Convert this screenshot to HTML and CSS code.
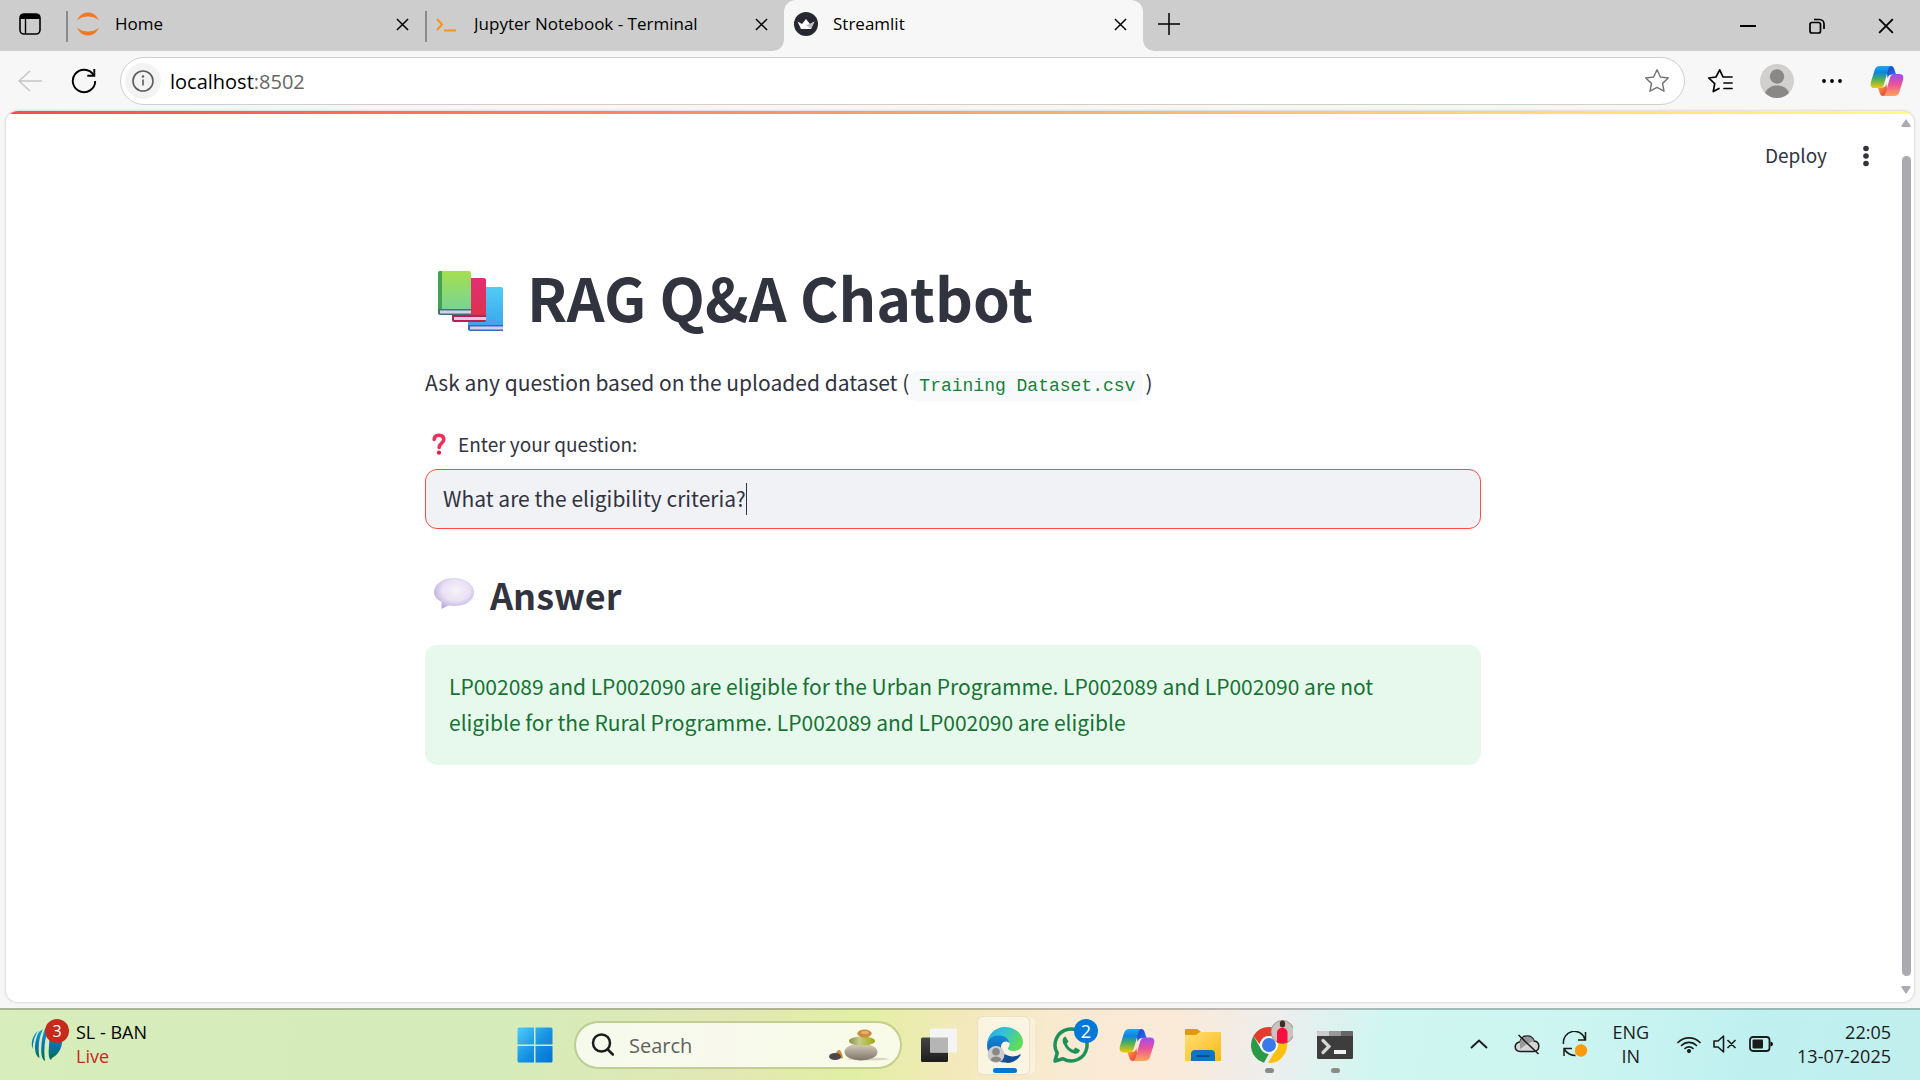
FILE: index.html
```html
<!DOCTYPE html>
<html lang="en">
<head>
<meta charset="utf-8">
<title>Streamlit</title>
<link rel="stylesheet" href="styles.css">
</head>
<body>
<svg class="defs" width="0" height="0" aria-hidden="true">
  <defs>
    <linearGradient id="cpA" x1="0" y1="0" x2="0" y2="1"><stop offset="0" stop-color="#1da9f5"/><stop offset=".3" stop-color="#0f83dc"/><stop offset=".6" stop-color="#4bb05a"/><stop offset="1" stop-color="#f7c80a"/></linearGradient>
    <linearGradient id="cpB" x1="0" y1="0" x2="0" y2="1"><stop offset="0" stop-color="#9b4df5"/><stop offset=".45" stop-color="#e9509a"/><stop offset="1" stop-color="#ffa657"/></linearGradient>
    <linearGradient id="cpC" x1="0" y1="0" x2="1" y2="1"><stop offset="0" stop-color="#1a3fc4"/><stop offset="1" stop-color="#2a7af0"/></linearGradient>
    <linearGradient id="cpD" x1="0" y1="0" x2="1" y2="1"><stop offset="0" stop-color="#ffb02e"/><stop offset="1" stop-color="#e0304e"/></linearGradient>
    <symbol id="copilot" viewBox="0 0 36 36">
      <path d="M17 2h5c2 0 3 1 3.600 3l2 6h-4c-3 0-4 1-5 4z" fill="url(#cpC)"/>
      <path d="M19 34h-5c-2 0-3-1-3.600-3l-2-6h4c3 0 4-1 5-4z" fill="url(#cpD)"/>
      <path d="M10.500 2H23c-2 0-3 1.500-3.600 3.500L15 21c-.8 3-2.400 4.500-5 4.500H4.500C1 25.500 0 22.500 1 19L5 6c.9-2.700 2.600-4 5.500-4z" fill="url(#cpA)"/>
      <path d="M25.500 34H13c2 0 3-1.500 3.600-3.500L21 15c.8-3 2.400-4.500 5-4.500h5.500c3.500 0 4.500 3 3.500 6.500l-4 13c-.9 2.700-2.600 4-5.500 4z" fill="url(#cpB)"/>
    </symbol>
    <symbol id="cross" viewBox="0 0 14 14"><path d="M1 1l12 12M13 1L1 13" fill="none" stroke="#000" stroke-width="1.600"/></symbol>
  </defs>
</svg>

<header class="tabstrip">
  <button class="tab-actions" aria-label="Tab actions">
    <svg width="22" height="22" viewBox="0 0 22 22"><rect x="1" y="1" width="20" height="20" rx="4" fill="none" stroke="#000" stroke-width="1.600"/><path d="M1 6V4a3 3 0 0 1 3-3h14a3 3 0 0 1 3 3v2z"/><path d="M6.500 6v15" stroke="#000" stroke-width="1.400"/></svg>
  </button>
  <div class="tab">
    <svg width="24" height="24" viewBox="0 0 24 24" fill="#f37726"><path d="M1 8.500C3 3.500 7 .5 12 .5s9 3 11 8C20.500 6 16.500 4.500 12 4.500S3.500 6 1 8.500z"/><path d="M1 15.500c2 5 6 8 11 8s9-3 11-8c-2.500 2.500-6.500 4-11 4s-8.500-1.500-11-4z"/></svg>
    <span class="tab-title">Home</span>
    <button class="tab-close" aria-label="Close tab"><svg width="13" height="13"><use href="#cross"/></svg></button>
  </div>
  <div class="tab">
    <svg width="24" height="24" viewBox="0 0 24 24" fill="none" stroke="#ff9018" stroke-width="2"><path d="M2 7l5 5.500L2 18M9 18.500h12"/></svg>
    <span class="tab-title">Jupyter Notebook - Terminal</span>
    <button class="tab-close" aria-label="Close tab"><svg width="13" height="13"><use href="#cross"/></svg></button>
  </div>
  <div class="tab active">
    <svg width="24" height="24" viewBox="0 0 24 24"><circle cx="12" cy="12" r="12" fill="#262730"/><path d="M3.500 9.500l4.500 2.500 4-5 4 5 4.500-2.500-3.500 7.500H7z" fill="#fff"/><path d="M12 13l4-1 4.500-2.500-3.500 7z" fill="#bbb"/></svg>
    <span class="tab-title">Streamlit</span>
    <button class="tab-close" aria-label="Close tab"><svg width="13" height="13"><use href="#cross"/></svg></button>
  </div>
  <button class="new-tab" aria-label="New tab"><svg width="22" height="22" viewBox="0 0 22 22"><path d="M11 0v22M0 11h22" stroke="#000" stroke-width="1.500"/></svg></button>
  <div class="window-controls">
    <button aria-label="Minimize"><svg width="16" height="16" viewBox="0 0 16 16"><path d="M0 8h16" stroke="#000" stroke-width="2"/></svg></button>
    <button aria-label="Restore"><svg width="16" height="16" viewBox="0 0 16 16" fill="none" stroke="#000" stroke-width="1.700"><rect x="1" y="4.500" width="10.500" height="10.500" rx="2"/><path d="M5 1.500h5.500a4.500 4.500 0 0 1 4.500 4.500v5"/></svg></button>
    <button aria-label="Close"><svg width="16" height="16"><use href="#cross"/></svg></button>
  </div>
</header>

<nav class="toolbar">
  <button class="back" aria-label="Back"><svg width="24" height="24" viewBox="0 0 24 24" fill="none" stroke="#c6c6c6" stroke-width="1.500"><path d="M24 12H1M12 2L1 12l11 10"/></svg></button>
  <button class="reload" aria-label="Refresh"><svg width="26" height="26" viewBox="0 0 26 26" fill="none" stroke="#000" stroke-width="1.900"><path d="M22.500 7A11.200 11.200 0 1 0 24.200 13"/><path d="M23.300 1v6.800h-7"/></svg></button>
  <div class="address">
    <button class="site-info" aria-label="View site information"><svg width="22" height="22" viewBox="0 0 22 22"><circle cx="11" cy="11" r="10" fill="none" stroke="#5c5c5c" stroke-width="1.600"/><path d="M11 9.500v6" stroke="#5c5c5c" stroke-width="1.600"/><circle cx="11" cy="6.500" r="1.200" fill="#5c5c5c"/></svg></button>
    <span class="url">localhost<span class="port">:8502</span></span>
    <button aria-label="Add to favorites"><svg width="26" height="26" viewBox="0 0 26 26"><path d="M13 1.800l3.400 7.200 7.900 1-5.800 5.400 1.500 7.800-7-3.800-7 3.800 1.500-7.800L1.700 10l7.900-1z" fill="none" stroke="#767676" stroke-width="1.500" stroke-linejoin="round"/></svg></button>
  </div>
  <div class="tools">
    <button aria-label="Favorites"><svg width="26" height="26" viewBox="0 0 26 26" fill="none" stroke="#000" stroke-width="1.700" stroke-linejoin="round" stroke-linecap="round"><path d="M12 20.500L6.300 23.500l1.400-7.800L1.700 10l7.300-1 3.700-7.200L16 9h9M17 15h8M17 20.500h8"/></svg></button>
    <button aria-label="Profile"><svg width="34" height="34" viewBox="0 0 34 34"><circle cx="17" cy="17" r="17" fill="#d2d0ce"/><ellipse cx="17" cy="12.500" rx="7.200" ry="7.200" fill="#8a8886"/><path d="M5 29c2-5 6.500-7.500 12-7.500S27 24 29 29c-3 3-7.500 5-12 5s-9-2-12-5z" fill="#8a8886"/></svg></button>
    <button aria-label="Settings and more"><svg width="22" height="6" viewBox="0 0 22 6"><circle cx="3" cy="3" r="1.900"/><circle cx="11" cy="3" r="1.900"/><circle cx="19" cy="3" r="1.900"/></svg></button>
    <button aria-label="Copilot"><svg width="34" height="34"><use href="#copilot"/></svg></button>
  </div>
</nav>

<div class="viewport">
  <div class="app">
    <div class="app-header">
      <button class="deploy">Deploy</button>
      <button class="menu" aria-label="Main menu"><svg width="6" height="22" viewBox="0 0 6 22" fill="#31333f"><circle cx="3" cy="3.500" r="2.800"/><circle cx="3" cy="11" r="2.800"/><circle cx="3" cy="18.500" r="2.800"/></svg></button>
    </div>
    <main class="block">
      <h1>
        <svg width="66" height="70" viewBox="0 -8 66 70" aria-hidden="true">
          <defs>
            <linearGradient id="bkG" x1="0" y1="0" x2="0" y2="1"><stop offset="0" stop-color="#a5df50"/><stop offset="1" stop-color="#78d493"/></linearGradient>
            <linearGradient id="bkB" x1="0" y1="0" x2="0" y2="1"><stop offset="0" stop-color="#52cdf5"/><stop offset="1" stop-color="#3ba6ed"/></linearGradient>
            <linearGradient id="bkR" x1="0" y1="0" x2="0" y2="1"><stop offset="0" stop-color="#e32e74"/><stop offset="1" stop-color="#dc3350"/></linearGradient>
          </defs>
          <path d="M31 19a2 2 0 0 1 2-2h31a2 2 0 0 1 2 2v36H31z" fill="url(#bkB)"/><path d="M31 55h35v6H33a2 2 0 0 1-2-2z" fill="#3469c8"/><path d="M33 56.500h33v3H33z" fill="#d3cdf0"/>
          <path d="M15 10a2 2 0 0 1 2-2h30a2 2 0 0 1 2 2v36H15z" fill="url(#bkR)"/><path d="M15 45h34v5a2 2 0 0 1-2 2H17a2 2 0 0 1-2-2z" fill="#ba1f55"/><path d="M17 47h32v3H17z" fill="#e0c8e8"/>
          <path d="M1 3a2 2 0 0 1 2-2h29a2 2 0 0 1 2 2v36H1z" fill="url(#bkG)"/><path d="M1 3a2 2 0 0 1 2-2h2v38H1z" fill="#46a052"/><path d="M1 39h33v6H3a2 2 0 0 1-2-2z" fill="#3b7471"/><path d="M3 40.500h31v3H3z" fill="#d8d0ee"/>
        </svg>
        RAG Q&amp;A Chatbot
      </h1>
      <p class="intro">Ask any question based on the uploaded dataset (<code>Training Dataset.csv</code>)</p>
      <label class="field-label" for="question">
        <svg width="14" height="22" viewBox="0 0 14 22" aria-hidden="true"><path d="M2.200 6.500C2.200 3.500 4 2.200 7 2.200s4.800 1.500 4.800 4.300c0 3.700-4.600 3.500-4.600 8" fill="none" stroke="#ee3158" stroke-width="3.600" stroke-linecap="round"/><circle cx="7" cy="19.700" r="2.100" fill="#e01f45"/></svg>
        Enter your question:
      </label>
      <div class="field"><input id="question" type="text" value="What are the eligibility criteria?"><span class="caret"></span></div>
      <h2>
        <svg width="42" height="34" viewBox="0 0 42 34" aria-hidden="true">
          <defs><radialGradient id="bub" cx=".55" cy=".4" r=".62"><stop offset="0" stop-color="#f6f2fb"/><stop offset=".55" stop-color="#e9e1f4"/><stop offset="1" stop-color="#bba9dc"/></radialGradient></defs>
          <path d="M21 1c11.500 0 20 6.300 20 14.500S32.500 29 21 29c-2 0-4 0-5.500-.4L8.500 32v-7C4 22.500 1 19.500 1 15.500 1 7.300 9.500 1 21 1z" fill="url(#bub)"/>
        </svg>
        Answer
      </h2>
      <div class="alert" role="status">LP002089 and LP002090 are eligible for the Urban Programme. LP002089 and LP002090 are not eligible for the Rural Programme. LP002089 and LP002090 are eligible</div>
    </main>
  </div>
  <div class="scrollbar" aria-hidden="true">
    <svg width="10" height="8" viewBox="0 0 10 8"><path d="M5 0l4.500 6.500q.4 1.500-1 1.500h-7q-1.400 0-1-1.500z" fill="#aaaab0"/></svg>
    <div class="thumb"></div>
    <svg width="10" height="8" viewBox="0 0 10 8"><path d="M5 8l4.500-6.500Q9.900 0 8.500 0h-7Q.1 0 .5 1.500z" fill="#aaaab0"/></svg>
  </div>
</div>

<footer class="taskbar">
  <button class="widget">
    <span class="widget-icon">
      <svg width="32" height="34" viewBox="0 0 32 34"><defs><linearGradient id="icc" x1="0" y1="0" x2="0" y2="1"><stop offset="0" stop-color="#08a7e0"/><stop offset=".5" stop-color="#0872ae"/><stop offset="1" stop-color="#00704a"/></linearGradient></defs>
      <path d="M7 4C2 8-.5 15 1.500 22c.5-7 2-13 5.500-18zM8 5l4-3C8 10 6.500 20 8.500 31 5 29 4 25 4 19 4.500 13 6 8 8 5zM14 1.500h4C13.500 11 12.500 22 14 34c-3-1.500-4-6-3.700-13 .3-8 1.500-14 3.700-19.500zM20 1c8 1 11 8 11 15-1 8-6 13-10 15l-1 2c-2-1-2.700-5-2.200-11C18.200 13 19 6 20 1z" fill="url(#icc)"/></svg>
      <span class="badge red">3</span>
    </span>
    <span class="widget-text">SL - BAN<br><span class="live">Live</span></span>
  </button>

  <div class="apps">
    <button class="app-btn" aria-label="Start"><svg width="36" height="36" viewBox="0 0 36 36"><defs><linearGradient id="win" x1="0" y1="0" x2="1" y2="1"><stop offset="0" stop-color="#4dcdfc"/><stop offset=".55" stop-color="#1590e2"/><stop offset="1" stop-color="#0074d4"/></linearGradient></defs><path d="M2 .5h15v17H.5V2Q.5.500 2 .5zM18.500.5H34q1.500 0 1.500 1.500v15.500h-17zM.5 19H17v16.500H2Q.5 35.500.5 34zM18.500 19h17v15q0 1.500-1.500 1.500H18.500z" fill="url(#win)"/></svg></button>
    <label class="search">
      <svg width="24" height="24" viewBox="0 0 24 24" fill="none" stroke="#1d1d1d" stroke-width="2.500" stroke-linecap="round"><circle cx="10.500" cy="10" r="8.500"/><path d="M16.800 16.500l5 5"/></svg>
      <input type="text" placeholder="Search" aria-label="Search">
      <svg width="62" height="32" viewBox="0 0 62 32" aria-hidden="true">
        <defs><linearGradient id="st1" x1="0" y1="0" x2="0" y2="1"><stop offset="0" stop-color="#d8cfbf"/><stop offset="1" stop-color="#7d7466"/></linearGradient><linearGradient id="st2" x1="0" y1="0" x2="1" y2="0"><stop offset="0" stop-color="#8c8a4a"/><stop offset=".4" stop-color="#c6cd83"/><stop offset="1" stop-color="#a3a80c"/></linearGradient></defs>
        <ellipse cx="40" cy="30" rx="21" ry="1.500" fill="#c3bda5" opacity=".6"/>
        <path d="M6 28q3-8 6-7 2 3 3 8-4 2-9-1z" fill="#c9893c"/><ellipse cx="7" cy="27.500" rx="6" ry="3.500" fill="#48464a"/>
        <ellipse cx="33" cy="23" rx="16.500" ry="8.500" fill="url(#st1)"/><ellipse cx="34" cy="12" rx="13" ry="4.500" fill="url(#st2)"/><ellipse cx="36.500" cy="4.500" rx="7.200" ry="4" fill="#cc8a3f"/><ellipse cx="37" cy="3.500" rx="4" ry="1.800" fill="#e7ae69"/>
      </svg>
    </label>
    <button class="app-btn" aria-label="Task view"><svg width="36" height="34" viewBox="0 0 36 34"><defs><linearGradient id="tv" x1="0" y1="0" x2="0" y2="1"><stop offset="0" stop-color="#444"/><stop offset="1" stop-color="#1c1c1c"/></linearGradient></defs><rect y="9.500" width="27" height="24.500" rx="1.500" fill="url(#tv)"/><rect x="9" y=".5" width="27" height="24" rx="1.500" fill="#f4f4f4"/><path d="M9 9.500h18v15H9z" fill="#b5b5b5"/></svg></button>
    <button class="app-btn current" aria-label="Microsoft Edge">
      <svg width="36" height="36" viewBox="0 0 36 36">
        <defs><linearGradient id="ed1" x1="0" y1="0" x2="1" y2=".4"><stop offset="0" stop-color="#2aa8e8"/><stop offset=".5" stop-color="#33c2d6"/><stop offset="1" stop-color="#5fdc5a"/></linearGradient><linearGradient id="ed2" x1="0" y1="0" x2="0" y2="1"><stop offset="0" stop-color="#1585d8"/><stop offset="1" stop-color="#0c59a4"/></linearGradient></defs>
        <path d="M0 18C0 8 8 0 18 0s18 7 18 15c0 6-4.500 9-9.500 9-3.500 0-5.500-1-5.500-2.500 0-1 1.500-2 1.500-4.500 0-4-4-7-9-7C7 10 1 13 0 18z" fill="url(#ed1)"/>
        <path d="M0 18C1 11.500 6 8.500 11.500 8.500c6 0 10.500 3.500 11 7.500-3-3-8-1.500-8.500 3-.8 6 3.500 12 10 15-13 5-24-4-24-16z" fill="url(#ed2)"/>
        <path d="M14 20c0 6 6 9.500 12 9.500 3 0 5-1 6.500-2 1-.5 1.500 0 1 1C30.500 33 26 36 20 36c-5-2-8-9-6-16z" fill="#124e91"/>
        <circle cx="9" cy="27.500" r="8.500" fill="#cfcdcb"/><circle cx="9" cy="24.800" r="3.800" fill="#8a8886"/><path d="M3.500 33c1-2.500 3-3.500 5.500-3.500s4.500 1 5.500 3.500a8.500 8.500 0 0 1-11 0z" fill="#8a8886"/>
      </svg>
    </button>
    <button class="app-btn" aria-label="WhatsApp"><svg width="36" height="36" viewBox="0 0 36 36"><path d="M2 34l2.200-8A16 16 0 1 1 10 31.800z" fill="none" stroke="#1d9159" stroke-width="3.500" stroke-linejoin="round"/><path d="M12.500 9.500c-3 1-3.500 4-2 7.500 2.500 5 6 8.200 10.500 9.500 3 .8 5.500-.5 6-3.500l-4.500-2.500-2.300 2.500c-3.200-1.500-5-3.300-6.400-6.200l1.700-2.300z" fill="#1d9159"/></svg><span class="badge blue">2</span></button>
    <button class="app-btn" aria-label="Copilot"><svg width="36" height="36"><use href="#copilot"/></svg></button>
    <button class="app-btn" aria-label="File Explorer"><svg width="36" height="34" viewBox="0 0 36 34"><defs><linearGradient id="fo" x1="0" y1="0" x2="1" y2="1"><stop offset="0" stop-color="#ffdf76"/><stop offset="1" stop-color="#fbb916"/></linearGradient></defs><path d="M0 2Q0 1 1 1h10q1.500 0 2.500 1l2.500 2v4H0z" fill="#dd9b0b"/><path d="M0 7h11l4-3h20q1 0 1 1v27q0 1-1 1H1q-1 0-1-1z" fill="url(#fo)"/><path d="M6 33v-7q0-4 4-4h16q4 0 4 4v7z" fill="#0d75c4"/><path d="M11.500 28h13" stroke="#0a4d8c" stroke-width="2"/></svg></button>
    <button class="app-btn running" aria-label="Google Chrome"><svg class="chrome" width="48" height="44" viewBox="-2 0 48 44"><path d="M4 26a18 18 0 0 1 2.400-9l8 13.500 7.600 4-5 9.200A18 18 0 0 1 4 26z" fill="#2b9a48"/><path d="M6.400 17A18 18 0 0 1 37.600 17H22a9 9 0 0 0-8.500 6l-1 2z" fill="#e33b2e"/><path d="M37.600 17A18 18 0 0 1 21 44l8-13.500q3-7-2-13.500z" fill="#fdc00f"/><circle cx="22" cy="26" r="9" fill="#fff"/><circle cx="22" cy="26" r="7" fill="#3b78ec"/><circle cx="35.500" cy="13" r="11.500" fill="#cdc3bd" stroke="#9c938e"/><path d="M30 23.500V13q1-3.500 4-4h3q2.500.5 3.500 4v10.500q-5 2-10.500 0z" fill="#f6103f"/><ellipse cx="35.500" cy="5" rx="2.700" ry="3.500" fill="#3a2d2b"/></svg></button>
    <button class="app-btn running" aria-label="Terminal"><svg width="36" height="28" viewBox="0 0 36 28"><rect width="36" height="28" rx="1.500" fill="#3d3d3d"/><path d="M0 5V1.500Q0 0 1.500 0H12v5z" fill="#ccc"/><path d="M12 0h12v5H12z" fill="#999"/><path d="M24 0h10.500Q36 0 36 1.500V5H24z" fill="#666"/><path d="M6 9.500l6 6-6 6" fill="none" stroke="#d6d6d6" stroke-width="3.200" stroke-linecap="round"/><path d="M17 19h12v4H17z" fill="#f0f0f0"/></svg></button>
  </div>

  <div class="tray">
    <button aria-label="Show hidden icons"><svg width="18" height="10" viewBox="0 0 18 10"><path d="M1 9l8-7.500L17 9" fill="none" stroke="#1b1b1b" stroke-width="2"/></svg></button>
    <button class="cloud" aria-label="OneDrive"><svg width="26" height="22" viewBox="0 0 26 22"><path d="M6.500 18.500C3 18.500 1.200 16.500 1.200 13.800S3.500 9 6 9c.8-3.500 3.500-6 7.200-6 3.600 0 6 2.200 6.800 5 3 .3 4.800 2.500 4.800 5.300s-2 5.200-5 5.200z" fill="#d5d5d5" stroke="#1b1b1b" stroke-width="1.500"/><path d="M6 9c.8-3.500 3.500-5.500 7.200-5.500S19 5.500 20 8l-7 3-7 5z" fill="#999"/><path d="M4.500 2l20 19" stroke="#1b1b1b" stroke-width="1.500"/></svg></button>
    <button class="sync" aria-label="Updates"><svg width="26" height="26" viewBox="0 0 26 26"><path d="M1.500 13A11 11 0 0 1 23 8.500M23.500 1v8h-7.500M2 25v-7.500h8M2.500 18.500q4 6 11 6" fill="none" stroke="#1b1b1b" stroke-width="1.500"/><circle cx="19" cy="19.500" r="6.200" fill="#ff9a0a"/></svg></button>
    <button class="lang">ENG<br>IN</button>
    <button class="status" aria-label="Network, volume and battery">
      <svg width="24" height="18" viewBox="0 0 24 18" fill="none" stroke="#1b1b1b" stroke-width="1.700" stroke-linecap="round"><path d="M1 7.500a15.500 15.500 0 0 1 22 0M4.500 10.500a10.600 10.600 0 0 1 15 0M8 13.500a5.700 5.700 0 0 1 8 0"/><circle cx="12" cy="16" r="1.200" fill="#1b1b1b"/></svg>
      <svg width="24" height="18" viewBox="0 0 24 18" fill="none" stroke="#1b1b1b" stroke-width="1.600" stroke-linejoin="round"><path d="M1 6h4l5.500-5v16L5 12H1zM14.500 5l8 8M22.500 5l-8 8"/></svg>
      <svg width="24" height="16" viewBox="0 0 24 16"><rect x="1" y="1" width="19.500" height="14" rx="3" fill="none" stroke="#1b1b1b" stroke-width="1.800"/><rect x="3.500" y="3.500" width="10.500" height="9" rx="1" fill="#1b1b1b"/><path d="M21.500 5.500q2.500.5 2.500 2.500t-2.500 2.500z"/></svg>
    </button>
    <button class="clock">22:05<br>13-07-2025</button>
  </div>
</footer>
</body>
</html>
```

FILE: styles.css
```css
* { box-sizing: border-box; }

body {
  margin: 0;
  min-height: 100vh;
  display: flex;
  flex-direction: column;
  background: #f7f7f7;
  font-family: "Open Sans", "Noto Sans", sans-serif;
  font-size: 17px;
  color: #000;
}

button {
  border: 0;
  padding: 0;
  background: none;
  font: inherit;
  color: inherit;
  display: flex;
  align-items: center;
  justify-content: center;
}

svg { display: block; flex: none; }

.defs { position: absolute; }

/* Tab strip */
.tabstrip {
  display: flex;
  height: 51px;
  background: #cdcdcd;
}

.tab-actions { width: 66px; padding-right: 6px; padding-bottom: 3px; }

.tab {
  flex: 0 1 359px;
  min-width: 0;
  display: flex;
  align-items: center;
  gap: 15px;
  padding: 0 16px 3px 10px;
  position: relative;
}

.tab:not(.active)::before {
  content: "";
  position: absolute;
  left: 0;
  top: 11px;
  width: 2px;
  height: 31px;
  background: #8b8b8b;
}

.tab-title {
  flex: 1;
  padding-bottom: 2px;
  white-space: nowrap;
  overflow: hidden;
}

.tab.active {
  background: #f7f7f7;
  border-radius: 12px 12px 0 0;
}

.tab.active::before,
.tab.active::after {
  content: "";
  position: absolute;
  bottom: 0;
  width: 10px;
  height: 10px;
}

.tab.active::before {
  right: 100%;
  background: radial-gradient(circle at 0 0, transparent 9px, #f7f7f7 10px);
}

.tab.active::after {
  left: 100%;
  background: radial-gradient(circle at 100% 0, transparent 9px, #f7f7f7 10px);
}

.new-tab { width: 52px; padding-bottom: 4px; }

.window-controls { display: flex; margin-left: auto; }
.window-controls button { width: 69px; }

/* Toolbar */
.toolbar {
  display: flex;
  align-items: center;
  height: 60px;
  padding: 0 16px 0 18px;
}

.reload { margin: 0 23px 0 29px; }

.address {
  flex: 1;
  display: flex;
  align-items: center;
  height: 48px;
  padding: 0 14px 0 4px;
  background: #fff;
  border: 1px solid #cfcfcf;
  border-radius: 24px;
}

.site-info {
  width: 36px;
  height: 36px;
  border-radius: 50%;
  background: #f3f3f3;
}

.url { flex: 1; padding-left: 9px; font-size: 20px; }
.port { color: #666; }

.tools {
  display: flex;
  align-items: center;
  gap: 27px;
  padding-left: 22px;
}

/* Page area */
.viewport {
  flex: 1;
  display: flex;
  margin: 0 6px 6px;
  background: linear-gradient(90deg, #ff4b4b, #ffa666 50%, #fffd80) top / 100% 3px no-repeat #fff;
  border-radius: 12px;
  box-shadow: 0 0 2px 1px #dcdcdc;
  overflow: hidden;
}

.app {
  flex: 1;
  font-family: "Noto Sans CJK SC", "Noto Sans CJK JP", sans-serif;
  color: #31333f;
}

.app-header {
  display: flex;
  justify-content: flex-end;
  align-items: center;
  gap: 36px;
  height: 90px;
  padding-right: 31px;
  font-size: 19px;
}

.deploy { padding-bottom: 3px; }

.block {
  max-width: 1056px;
  margin: 0 auto;
  padding-top: 56px;
  padding-bottom: 160px;
}

h1, h2, p { margin: 0; }

h1 {
  display: flex;
  align-items: center;
  gap: 24px;
  padding-left: 12px;
  font-size: 59px;
  line-height: 80px;
  font-weight: 700;
}

.intro {
  margin-top: 27px;
  font-size: 21px;
  line-height: 36px;
}

.intro code {
  padding: 5px 8px;
  margin: 0 2px;
  border-radius: 6px;
  background: #f8f9fb;
  color: #158237;
  font-family: "Liberation Mono", monospace;
  font-size: 18px;
}

.field-label {
  display: flex;
  align-items: center;
  gap: 12px;
  margin-top: 24px;
  padding-left: 7px;
  font-size: 19px;
  line-height: 32px;
}

.field {
  display: flex;
  align-items: center;
  height: 60px;
  margin-top: 9px;
  padding: 0 17px;
  border: 1px solid #ff4b4b;
  border-radius: 12px;
  background: #f0f2f6;
}

.field input {
  field-sizing: content;
  border: 0;
  padding: 0 0 2px;
  outline: 0;
  background: none;
  font: inherit;
  font-size: 21px;
  color: inherit;
}

.caret { width: 1px; height: 32px; background: #31333f; }

h2 {
  display: flex;
  align-items: center;
  gap: 15px;
  margin-top: 40px;
  padding-left: 8px;
  font-size: 36px;
  line-height: 50px;
  font-weight: 600;
}

.alert {
  margin-top: 26px;
  padding: 23px 48px 25px 24px;
  border-radius: 12px;
  background: #e7f9ed;
  color: #177233;
  font-size: 21px;
  line-height: 36px;
}

.scrollbar {
  width: 14px;
  display: flex;
  flex-direction: column;
  align-items: center;
  padding: 8px 3px 8px 1px;
}

.thumb {
  flex: 1;
  width: 9px;
  margin: 29px 0 10px;
  border-radius: 5px;
  background: #aaaab0;
}

/* Taskbar */
.taskbar {
  display: grid;
  grid-template-columns: 1fr auto 1fr;
  height: 72px;
  border-top: 2px solid rgba(60, 60, 60, 0.3);
  background: linear-gradient(100deg, #d7edbb 0%, #d5ecba 26%, #e2e8b4 38%, #e1efa3 45%, #f3e9bb 50%, #f9ead4 56%, #faead8 61%, #eeeeed 66%, #cff6f1 72%, #ccf5f1 82%, #bff0f0 91%, #c1efee 100%) border-box;
  font-size: 18px;
}

.widget { justify-self: start; gap: 13px; padding-left: 31px; padding-bottom: 2px; text-align: left; line-height: 24px; }
.widget-icon { position: relative; }
.live { color: #c42b1c; }

.badge {
  position: absolute;
  width: 24px;
  height: 24px;
  border-radius: 50%;
  color: #fff;
  line-height: 24px;
  text-align: center;
}

.badge.red { left: 14px; top: -8px; background: #c42b1c; font-size: 16px; }
.badge.blue { right: 6px; top: 9px; background: #0078d7; }

.apps { display: flex; align-items: center; margin-right: 50px; }

.app-btn { position: relative; width: 66px; height: 70px; }
.app-btn svg { position: relative; }

.current::before {
  content: "";
  position: absolute;
  left: 5px;
  top: 6px;
  width: 51px;
  height: 57px;
  border: 1px solid rgba(200, 180, 130, 0.3);
  border-radius: 6px;
  background: rgba(255, 255, 255, 0.5);
  box-shadow: 6px 0 0 -1px rgba(255, 255, 255, 0.35);
}

.current::after,
.running::after {
  content: "";
  position: absolute;
  bottom: 7px;
  left: 50%;
  width: 9px;
  height: 5px;
  margin-left: -4px;
  border-radius: 3px;
  background: #8a8c8a;
}

.current::after { width: 24px; margin-left: -12px; background: #0078d7; }

.chrome { margin: -8px -6px 0; }

.search {
  display: flex;
  align-items: center;
  width: 328px;
  height: 48px;
  margin: 0 4px 0 6px;
  padding: 0 10px 0 15px;
  border: 2px solid rgba(150, 160, 100, 0.4);
  border-radius: 24px;
  background: rgba(255, 255, 255, 0.75);
  background-clip: padding-box;
}

.search input {
  flex: 1;
  min-width: 0;
  border: 0;
  padding: 0 0 0 14px;
  outline: 0;
  background: none;
  font: inherit;
  font-size: 20px;
}

.search input::placeholder { color: #5f625a; opacity: 1; }

.tray {
  display: flex;
  justify-content: flex-end;
  align-items: center;
  padding-right: 29px;
  padding-bottom: 2px;
  color: #1b1b1b;
  line-height: 24px;
}

.cloud { margin-left: 26px; }
.sync { margin: 0 24px 0 22px; }
.lang { text-align: center; }
.status { gap: 12px; margin: 0 24px 0 28px; }
.clock { text-align: right; }
```
